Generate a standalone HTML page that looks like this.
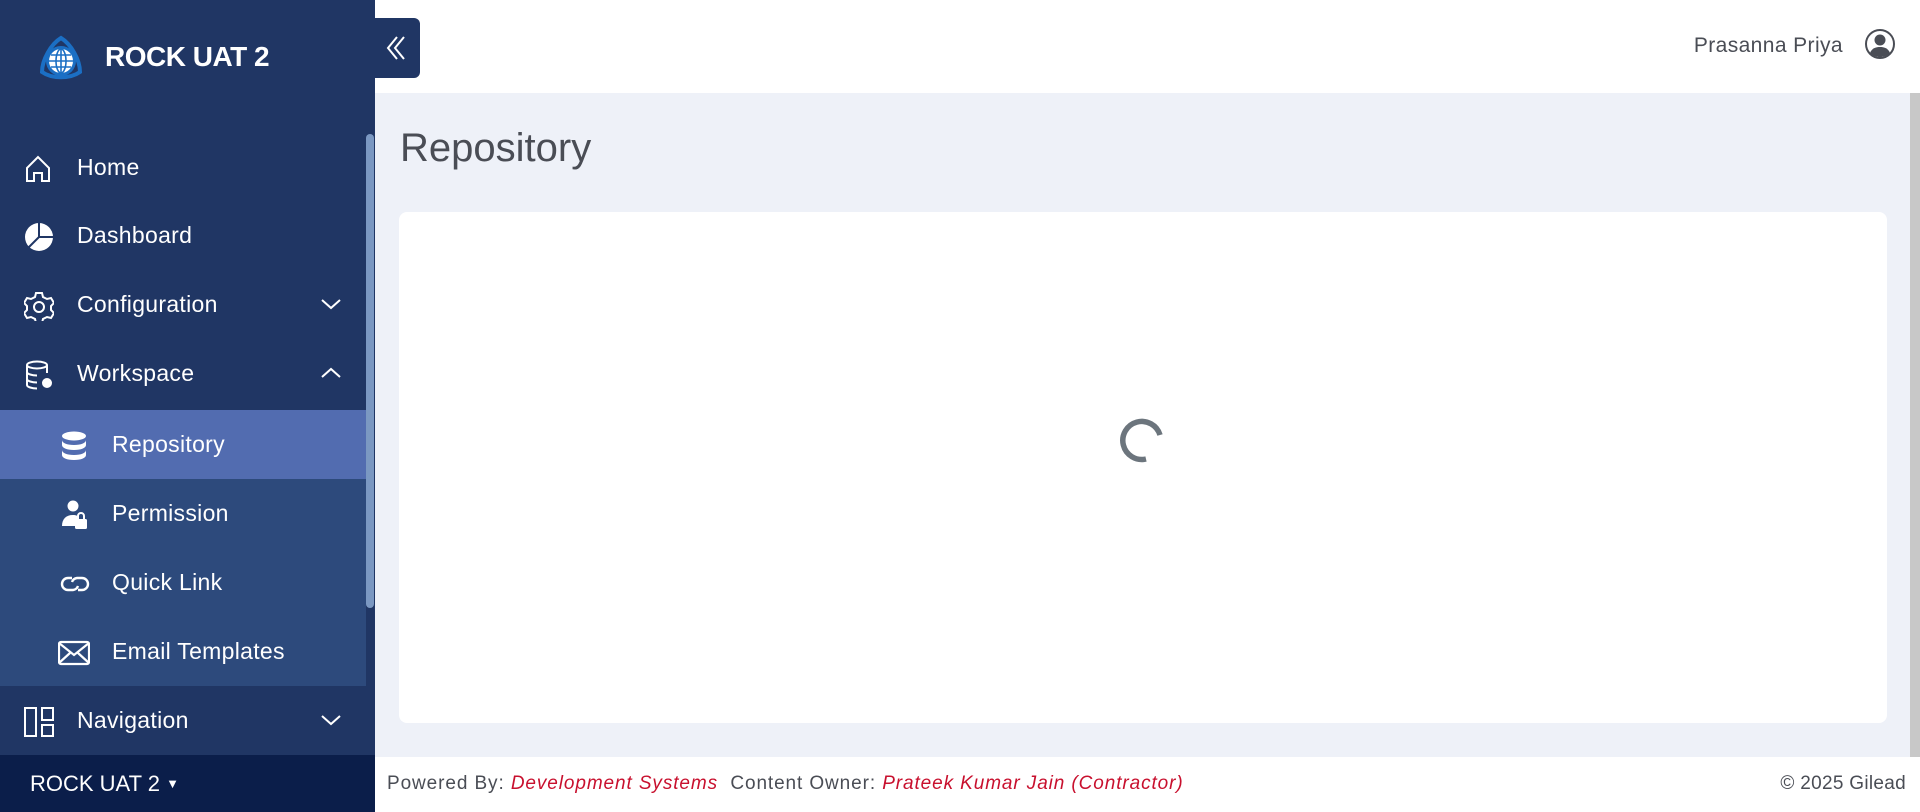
<!DOCTYPE html>
<html><head><meta charset="utf-8"><style>
*{box-sizing:border-box;margin:0;padding:0}
body{width:1920px;height:812px;overflow:hidden;font-family:"Liberation Sans",sans-serif;background:#eef1f8;position:relative}
.sb{position:absolute;left:0;top:0;width:375px;height:812px;background:#203664;color:#fff}
.logo{position:absolute;left:36px;top:34px;width:50px;height:50px}
.brand{position:absolute;left:105px;top:41px;font-size:28px;font-weight:bold;letter-spacing:-0.5px}
.item{position:absolute;left:0;width:366px;height:69px;display:flex;align-items:center;font-size:23px;letter-spacing:0.3px}
.item .ic{position:absolute;left:24px;top:21px;width:30px;height:30px}
.item .tx{position:absolute;left:77px}
.sub .ic{left:60px}
.sub .tx{left:112px}
.chev{position:absolute;left:320px;top:27px}
.subbg{position:absolute;left:0;top:410px;width:366px;height:276px;background:#2d4a7c}
.act{background:#526cb0}
.scr{position:absolute;left:366px;top:134px;width:8px;height:474px;background:#7b98c2;border-radius:4px}
.bot{position:absolute;left:0;top:755px;width:375px;height:57px;background:#0b1e4a;font-size:22px;padding:16px 0 0 30px}
.hdr{position:absolute;left:375px;top:0;width:1545px;height:93px;background:#fff}
.tog{position:absolute;left:375px;top:18px;width:45px;height:60px;background:#203664;border-radius:0 6px 6px 0}
.user{position:absolute;right:77px;top:34px;font-size:21px;color:#4a4d55;letter-spacing:0.4px}
.title{position:absolute;left:400px;top:126px;font-size:40px;color:#4a4d55}
.card{position:absolute;left:399px;top:212px;width:1488px;height:511px;background:#fff;border-radius:8px}
.foot{position:absolute;left:375px;top:757px;width:1545px;height:55px;background:#fff;font-size:19px;letter-spacing:0.9px;color:#4a4d55;padding:16px 0 0 12px}
.foot i{color:#c8102e}
.rscr{position:absolute;left:1910px;top:93px;width:10px;height:664px;background:#c8c8c8}
</style></head><body>
<div class="sb">
<svg class="logo" viewBox="0 0 50 50"><path d="M25 4 C35 10 44 26 44 38 C34 45 16 45 6 38 C6 26 15 10 25 4Z" fill="none" stroke="#1b6fc4" stroke-width="4"/><circle cx="25" cy="27" r="15" fill="#1b6fc4"/><circle cx="25" cy="27" r="12" fill="#fff"/><g stroke="#1b6fc4" stroke-width="1.6" fill="none"><ellipse cx="25" cy="27" rx="5" ry="12"/><line x1="25" y1="15" x2="25" y2="39"/><line x1="13" y1="27" x2="37" y2="27"/><line x1="15" y1="21" x2="35" y2="21"/><line x1="15" y1="33" x2="35" y2="33"/></g></svg>
<div class="brand">ROCK UAT 2</div>
<div class="subbg"></div>
<div class="item" style="top:133px"><svg class="ic" viewBox="0 0 30 30" fill="none" stroke="#fff" stroke-width="2"><path d="M3 14 L14 3 L25 14 V27 H18 V19 H10 V27 H3 Z"/></svg><span class="tx">Home</span></div>
<div class="item" style="top:201px"><svg class="ic" viewBox="0 0 30 30"><circle cx="15" cy="15" r="14" fill="#fff"/><path d="M15 1 V15 H29 M15 15 L5 25" stroke="#203664" stroke-width="2" fill="none"/></svg><span class="tx">Dashboard</span></div>
<div class="item" style="top:270px"><svg class="ic" viewBox="0 0 30 30" fill="none" stroke="#fff" stroke-width="2"><path d="M12 2h6l1 4 4 2 4-1 3 5-3 3v4l3 3-3 5-4-1-4 2-1 4h-6l-1-4-4-2-4 1-3-5 3-3v-4l-3-3 3-5 4 1 4-2z"/><circle cx="15" cy="16" r="5"/></svg><span class="tx">Configuration</span><svg class="chev" width="22" height="14" viewBox="0 0 22 14"><path d="M2 3 L11 11 L20 3" stroke="#fff" stroke-width="2" fill="none"/></svg></div>
<div class="item" style="top:339px"><svg class="ic" viewBox="0 0 30 30" fill="none" stroke="#fff" stroke-width="2"><ellipse cx="13" cy="5" rx="10" ry="3.5"/><path d="M3 5v20c0 2 5 3.5 10 3.5M23 5v8M3 12c0 2 5 3.5 10 3.5M3 19c0 2 5 3.5 10 3.5"/><circle cx="23" cy="23" r="4" fill="#fff"/></svg><span class="tx">Workspace</span><svg class="chev" width="22" height="14" viewBox="0 0 22 14"><path d="M2 11 L11 3 L20 11" stroke="#fff" stroke-width="2" fill="none"/></svg></div>
<div class="item sub act" style="top:410px"><svg class="ic" viewBox="0 0 30 30" fill="#fff"><ellipse cx="14" cy="5" rx="12" ry="4.5"/><path d="M2 9c0 3 5 5 12 5s12-2 12-5v5c0 3-5 5-12 5S2 17 2 14z"/><path d="M2 19c0 3 5 5 12 5s12-2 12-5v5c0 3-5 5-12 5S2 27 2 24z"/></svg><span class="tx">Repository</span></div>
<div class="item sub" style="top:479px"><svg class="ic" viewBox="0 0 30 30" fill="#fff"><circle cx="13" cy="6" r="5.5"/><path d="M2 26c0-7 4-11 11-11 3 0 5 1 6 2v9z"/><rect x="15" y="19" width="12" height="10" rx="1.5"/><path d="M18 19v-3a3 3 0 0 1 6 0v3" stroke="#fff" stroke-width="2" fill="none"/></svg><span class="tx">Permission</span></div>
<div class="item sub" style="top:548px"><svg class="ic" viewBox="0 0 30 30" fill="none" stroke="#fff" stroke-width="2.4"><path d="M12 9H8a6 6 0 0 0 0 12h5a6 6 0 0 0 5-4"/><path d="M18 21h4a6 6 0 0 0 0-12h-5a6 6 0 0 0-5 4"/></svg><span class="tx">Quick Link</span></div>
<div class="item sub" style="top:617px"><svg class="ic" viewBox="0 0 32 30" fill="none" stroke="#fff" stroke-width="2.2" style="left:58px;width:32px"><rect x="1" y="4" width="30" height="22" rx="2"/><path d="M1 5 L16 17 L31 5 M1 25 L12 15 M31 25 L20 15"/></svg><span class="tx">Email Templates</span></div>
<div class="item" style="top:686px"><svg class="ic" viewBox="0 0 30 30" fill="none" stroke="#fff" stroke-width="2"><rect x="1" y="1" width="11" height="28"/><rect x="18" y="1" width="11" height="12"/><rect x="18" y="18" width="11" height="11"/></svg><span class="tx">Navigation</span><svg class="chev" width="22" height="14" viewBox="0 0 22 14"><path d="M2 3 L11 11 L20 3" stroke="#fff" stroke-width="2" fill="none"/></svg></div>
<div class="scr"></div>
<div class="bot">ROCK UAT 2 <span style="font-size:13px;vertical-align:3px">&#9660;</span></div>
</div>
<div class="hdr"></div>
<div class="tog"><svg width="45" height="60" viewBox="0 0 45 60"><path d="M22 33 L13 44 L22 55 M29 33 L20 44 L29 55" transform="translate(0,-14)" stroke="#fff" stroke-width="2" fill="none"/></svg></div>
<div class="user">Prasanna Priya</div>
<svg style="position:absolute;left:1864px;top:28px" width="32" height="32" viewBox="0 0 32 32"><circle cx="16" cy="16" r="14" fill="#fff" stroke="#4a4d55" stroke-width="2"/><circle cx="16" cy="12" r="5.5" fill="#4a4d55"/><path d="M6 25c2-5 6-6 10-6s8 1 10 6c-3 3-6 4-10 4s-7-1-10-4z" fill="#4a4d55"/></svg>
<div class="title">Repository</div>
<div class="card"></div>
<svg style="position:absolute;left:1117px;top:414px" width="52" height="52" viewBox="0 0 52 52"><path d="M43 21 A19 19 0 1 0 29 45" stroke="#6c757d" stroke-width="5.5" fill="none"/></svg>
<div class="rscr"></div>
<div class="foot">Powered By: <i>Development Systems</i>&nbsp; Content Owner: <i>Prateek Kumar Jain (Contractor)</i><span style="position:absolute;right:14px;top:16px;letter-spacing:0.3px">© 2025 Gilead</span></div>
</body></html>
